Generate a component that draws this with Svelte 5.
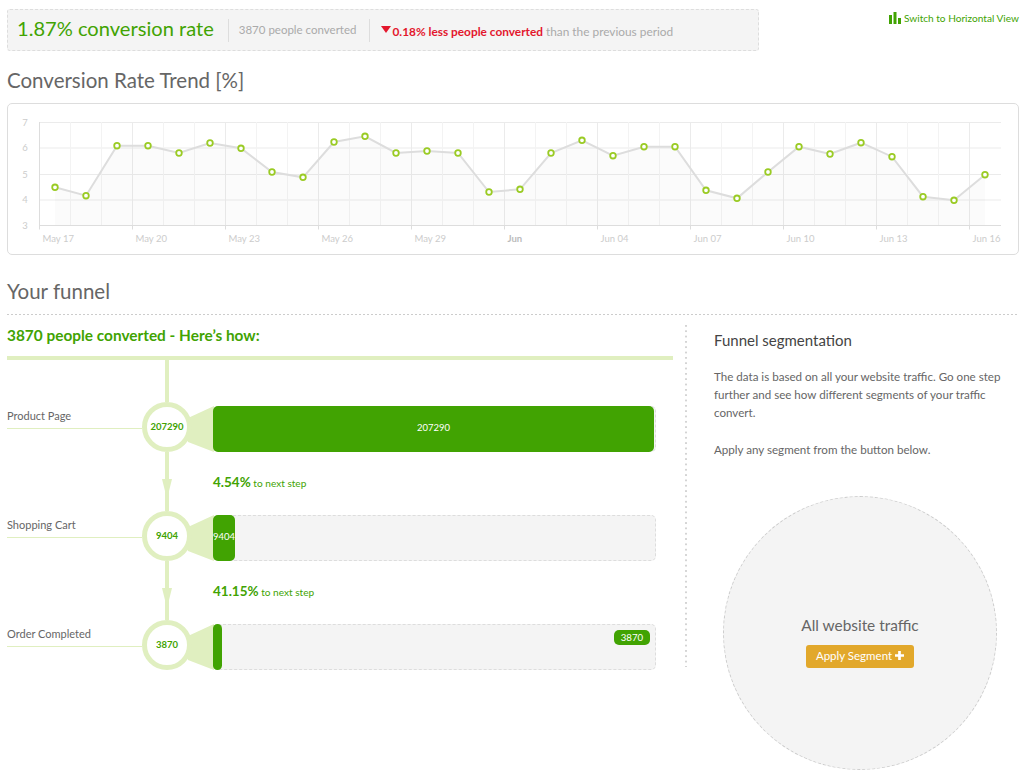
<script>
  const ys = [187.3,195.7,145.7,145.7,153,143,148.3,172,177.3,142,136.3,153,151,153,192,189.3,153,140.3,155.7,146.7,146.7,190.3,198.3,172,146.7,154,142.7,156.7,196.7,200.3,174.7];
  const x0 = 39.5, step = 31, bottom = 225.5;
  const rows = [[7,122.5],[6,148],[5,174.5],[4,200],[3,225.5]];
  const px = i => x0 + step / 2 + i * step;
  const pts = ys.map((y, i) => [px(i), y]);
  const line = pts.map(p => p.join(',')).join(' ');
  const area = `${pts[0][0]},${bottom} ${line} ${pts[pts.length - 1][0]},${bottom}`;
  const verticals = Array.from({ length: 31 }, (_, i) => i);
  const ticks = [[0,'May 17'],[3,'May 20'],[6,'May 23'],[9,'May 26'],[12,'May 29'],[15,'Jun'],[18,'Jun 04'],[21,'Jun 07'],[24,'Jun 10'],[27,'Jun 13'],[30,'Jun 16']];
  const steps = [
    { name: 'Product Page', count: 207290, width: 441, inside: true, next: '4.54%' },
    { name: 'Shopping Cart', count: 9404, width: 22, inside: true, next: '41.15%' },
    { name: 'Order Completed', count: 3870, width: 9, inside: false }
  ];
</script>

<div class="page">
  <header class="top">
    <div class="summary">
      <span class="rate">1.87% conversion rate</span>
      <span class="people">3870 people converted</span>
      <span class="delta">
        <svg class="tri" viewBox="0 0 10 7" width="10" height="7"><path d="M0 0h10L5 7z" /></svg>
        <b>0.18% less people converted</b> than the previous period
      </span>
    </div>
    <a class="switch" href="#top">
      <svg viewBox="0 0 12 12" width="12" height="12"><path d="M0 3h3v9H0zM4.500 0h3v12h-3zM9 6h3v6H9z" /></svg>
      Switch to Horizontal View
    </a>
  </header>

  <h2 class="trend">Conversion Rate Trend [%]</h2>

  <section class="card">
    <svg class="chart" viewBox="8 104 1010 150" width="1010" height="150">
      {#each rows as [v, y]}
        <line x1="39" x2="1001" y1={y} y2={y} class="grid" />
        <text x="25" y={y + 3} class="axis" text-anchor="middle">{v}</text>
      {/each}
      {#each verticals as i}
        <line x1={x0 + i * step} x2={x0 + i * step} y1="122" y2={bottom} class="grid" class:thin={i % 3 !== 0} />
      {/each}
      <polygon points={area} class="area" />
      <line x1="39" x2="1001" y1={bottom} y2={bottom} class="base" />
      <line x1={x0} x2={x0} y1="122" y2={bottom} class="base" />
      {#each ticks as [i, label]}
        <line x1={x0 + i * step} x2={x0 + i * step} y1={bottom} y2={bottom + 4} class="base" />
        <text x={x0 + i * step + 3} y="242" class="axis" class:bold={label === 'Jun'}>{label}</text>
      {/each}
      <polyline points={line} class="trendline" />
      {#each pts as [x, y]}
        <circle cx={x} cy={y} r="2.800" class="dot" />
      {/each}
    </svg>
  </section>

  <h2 class="funnel-title">Your funnel</h2>

  <div class="columns">
    <main class="funnel">
      <h3>3870 people converted - Here’s how:</h3>
      <div class="stem first"></div>
      {#each steps as s}
        <div class="step">
          <div class="name">{s.name}</div>
          <div class="node">{s.count}</div>
          <div class="track">
            <div class="fill" style="width:{s.width}px">{#if s.inside}{s.count}{/if}</div>
            {#if !s.inside}<span class="badge">{s.count}</span>{/if}
          </div>
        </div>
        {#if s.next}
          <div class="between">
            <div class="stem arrow"></div>
            <div class="next"><b>{s.next}</b> to next step</div>
          </div>
        {/if}
      {/each}
    </main>

    <aside class="side">
      <h4>Funnel segmentation</h4>
      <p>The data is based on all your website traffic. Go one step further and see how different segments of your traffic convert.</p>
      <p class="apply">Apply any segment from the button below.</p>
      <div class="segment">
        <div class="seg-name">All website traffic</div>
        <button type="button">Apply Segment <svg viewBox="0 0 10 10" width="9" height="9"><path d="M3.500 0h3v3.500H10v3H6.500V10h-3V6.500H0v-3h3.500z" /></svg></button>
      </div>
    </aside>
  </div>
</div>

<style>
  :global(body) { margin: 0; background: #fff; }
  .page { width: 1024px; height: 777px; overflow: hidden; box-sizing: border-box; padding: 9px 5px 0 7px; font-family: Lato, "Open Sans", sans-serif; color: #666; }
  .top { display: flex; justify-content: space-between; align-items: flex-start; }
  .summary { width: 752px; height: 42px; box-sizing: border-box; background: #f4f4f4; border: 1px dashed #ddd; border-radius: 3px; display: flex; align-items: center; padding-left: 9px; }
  .rate { font-size: 20.100px; color: #41a302; padding-right: 14px; border-right: 1px solid #ddd; height: 23px; line-height: 18px; }
  .people { font-size: 11.500px; color: #aaa; padding: 0 13px 0 10px; border-right: 1px solid #ddd; height: 23px; line-height: 21px; }
  .delta { font-size: 11.850px; color: #aaa; padding-left: 11px; padding-top: 2px; }
  .delta b { color: #e3172d; }
  .tri { fill: #e3172d; vertical-align: 3px; margin-right: -2px; }
  .switch { margin-top: 3px; font-size: 10.100px; color: #41a302; text-decoration: none; display: flex; gap: 3px; align-items: flex-end; line-height: 12px; }
  .switch svg { fill: #41a302; }
  .trend, .funnel-title { font-weight: 400; font-size: 20.500px; color: #666; margin: 0; line-height: 24px; }
  .trend { margin-top: 17px; margin-bottom: 11px; }
  .card { width: 1012px; height: 152px; box-sizing: border-box; border: 1px solid #ddd; border-radius: 5px; }
  .chart { display: block; }
  .grid { stroke: #ebebeb; stroke-width: 1; }
  .grid.thin { stroke: #f3f3f3; }
  .base { stroke: #ddd; stroke-width: 1; }
  .area { fill: rgba(0, 0, 0, 0.014); }
  .trendline { fill: none; stroke: #ddd; stroke-width: 2; }
  .dot { fill: #fff; stroke: #9acb24; stroke-width: 1.800; }
  .axis { font-size: 9.500px; fill: #ccc; font-family: Lato, sans-serif; }
  .axis.bold { font-weight: 700; fill: #bbb; }
  .funnel-title { margin-top: 24px; padding-bottom: 12px; width: 1011px; background: linear-gradient(to right, #ccc 2px, transparent 2px) left bottom / 4px 1px repeat-x; }
  .columns { display: flex; width: 1011px; margin-top: 10px; }
  .funnel { width: 666px; flex: none; }
  .funnel h3 { margin: 0; font-size: 15.400px; color: #41a302; font-weight: 700; line-height: 20px; padding-bottom: 11px; border-bottom: 4px solid #e0efc0; }
  .stem { width: 4px; background: #e0efc0; margin-left: 158px; }
  .stem.first { height: 42px; }
  .step { display: flex; height: 50px; }
  .name { width: 135px; flex: none; box-sizing: border-box; height: 27px; padding-top: 7px; border-bottom: 1px solid #e0efc0; font-size: 11px; line-height: 14px; color: #666; }
  .node { width: 50px; height: 50px; flex: none; box-sizing: border-box; border: 5px solid #e0efc0; border-radius: 50%; background: #fff; display: flex; align-items: center; justify-content: center; padding-bottom: 2px; font-size: 9.500px; font-weight: 700; color: #41a302; position: relative; z-index: 1; }
  .track { position: relative; margin: 4px 0 0 21px; width: 443px; height: 46px; box-sizing: border-box; background: #f4f4f4; border: 1px dashed #ddd; border-radius: 5px; }
  .track::before { content: ""; position: absolute; left: -26px; top: -1px; width: 26px; height: 46px; background: #e0efc0; clip-path: polygon(0 12px, 100% 0, 100% 46px, 0 36px); }
  .fill { position: absolute; left: -1px; top: -1px; bottom: -1px; box-sizing: border-box; padding-bottom: 3px; background: #41a302; border-radius: 5px; color: #fff; font-size: 9.500px; display: flex; align-items: center; justify-content: center; white-space: nowrap; overflow: hidden; }
  .badge { position: absolute; right: 5px; top: 5px; width: 36px; height: 15px; background: #41a302; border-radius: 5px; color: #fff; font-size: 9.700px; line-height: 15px; text-align: center; }
  .between { height: 59px; position: relative; }
  .stem.arrow { height: 59px; position: relative; }
  .stem.arrow::after { content: ""; position: absolute; left: -3px; top: 27px; border: 5px solid transparent; border-top: 20px solid #e0efc0; border-bottom: 0; }
  .next { position: absolute; left: 206px; top: 20px; font-size: 10.100px; color: #41a302; line-height: 20px; }
  .next b { font-size: 13.500px; }
  .side { flex: 1; margin-left: 12px; height: 342px; box-sizing: border-box; position: relative; background: linear-gradient(#d4d4d4 2px, transparent 2px) left top / 2px 5.330px repeat-y; }
  .side h4, .side p { margin-left: 29px; }
  .side h4 { margin-top: 5px; margin-bottom: 0; font-size: 15px; font-weight: 400; color: #444; line-height: 20px; }
  .side p { font-size: 11.600px; line-height: 18px; margin-top: 18px; margin-bottom: 0; margin-right: 10px; color: #666; }
  .side p.apply { margin-top: 19px; }
  .segment { position: absolute; left: 38px; top: 171px; width: 274px; height: 274px; box-sizing: border-box; padding-top: 17px; border: 1px dashed #ccc; border-radius: 50%; background: #f4f4f4; display: flex; flex-direction: column; align-items: center; justify-content: center; }
  .seg-name { font-size: 15.400px; line-height: 20px; color: #666; }
  button { margin-top: 10px; width: 108px; height: 23px; padding: 0 0 3px; box-sizing: border-box; border: none; border-radius: 3px; background: #e2a82b; color: #fff; font-family: inherit; font-size: 11.500px; display: flex; align-items: center; justify-content: center; gap: 3px; }
  button svg { fill: #fff; }
</style>
